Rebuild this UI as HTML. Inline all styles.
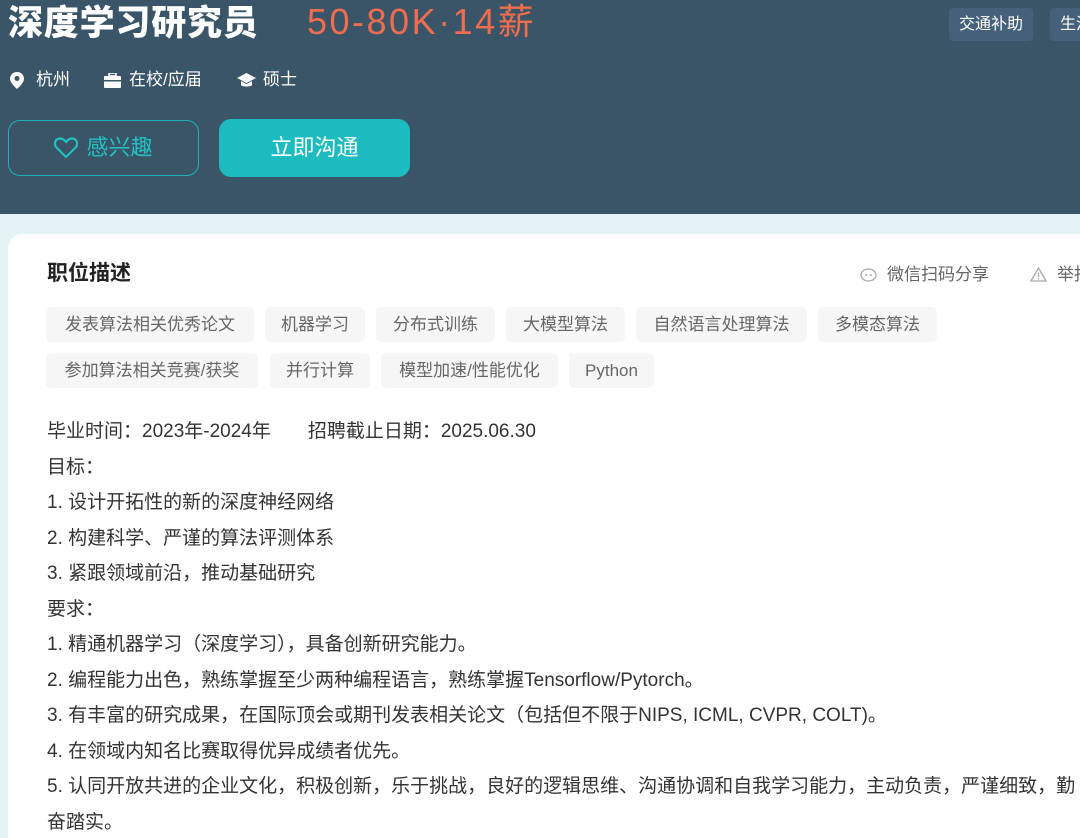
<!DOCTYPE html>
<html style="width:1080px;height:838px;overflow:hidden"><head><meta charset="utf-8"><style>
*{margin:0;padding:0;box-sizing:border-box}
body{width:1080px;height:838px;overflow:hidden;background:#e3f3f6;font-family:"Liberation Sans","Noto Sans CJK SC",sans-serif;position:relative}
.hd{position:absolute;left:0;top:0;width:1080px;height:214px;background:#3a5468}
.abs{position:absolute;white-space:nowrap}
.title{left:8px;top:2px;font-size:35px;font-weight:900;color:#fff;line-height:44px;letter-spacing:0.8px}
.sal{left:307px;top:0px;font-size:36px;color:#f26d4e;line-height:44px;letter-spacing:2.5px}
.info{top:68px;font-size:17px;color:#fff;line-height:24px}
.btn1{left:8px;top:120px;width:191px;height:56px;border:1px solid #1fb3b8;border-radius:12px;color:#22c0c2;font-size:22px;line-height:54px;text-align:center}
.btn2{left:219px;top:119px;width:191px;height:58px;background:#1cbcc0;border-radius:12px;color:#fff;font-size:22px;line-height:58px;text-align:center}
.wt{top:8px;height:33px;background:#45607a;border-radius:4px;color:#fff;font-size:16px;line-height:33px;padding:0 10px}
.card{position:absolute;left:8px;top:234px;width:1100px;height:604px;background:#fff;border-radius:14px 0 0 0}
.h2{left:47px;top:260px;font-size:21px;font-weight:bold;color:#222;line-height:28px}
.sh{top:264px;font-size:17px;color:#666;line-height:22px}
.tag{height:35px;background:#f6f6f6;border-radius:5px;color:#666;font-size:17px;line-height:35px;text-align:center}
.txt{left:47px;top:414px;font-size:19px;color:#333;line-height:35.5px}
</style></head><body>
<div class="hd"></div>
<div class="abs title">深度学习研究员</div>
<div class="abs sal">50-80K·14薪</div>
<div class="abs wt" style="left:949px">交通补助</div>
<div class="abs wt" style="left:1050px">生活</div>
<svg class="abs" style="left:10px;top:72px" width="14" height="17" viewBox="0 0 14 17"><path d="M7 0C3 0 0 3 0 7c0 4 7 10 7 10s7-6 7-10C14 3 11 0 7 0z" fill="#fff"/><circle cx="7" cy="6.5" r="2.5" fill="#3a5468"/></svg>
<div class="abs info" style="left:36px">杭州</div>
<svg class="abs" style="left:104px;top:73px" width="17" height="15" viewBox="0 0 17 15"><rect x="5" y="0" width="7" height="3" fill="none" stroke="#fff" stroke-width="1.6"/><rect x="0" y="3" width="17" height="12" rx="1" fill="#fff"/><rect x="0" y="7" width="17" height="1.5" fill="#3a5468"/></svg>
<div class="abs info" style="left:129px">在校/应届</div>
<svg class="abs" style="left:237px;top:73px" width="19" height="15" viewBox="0 0 19 15"><path d="M9.5 0L19 5 9.5 10 0 5z" fill="#fff"/><path d="M4 8v4c0 2 11 2 11 0V8l-5.5 3z" fill="#fff"/></svg>
<div class="abs info" style="left:263px">硕士</div>
<div class="abs btn1"><svg style="vertical-align:-3px;margin-right:8px" width="24" height="21" viewBox="0 0 24 21"><path d="M12 20L2.5 10.5C-0.5 7.5 1 2 5.5 1.5 8.5 1.2 10.5 3 12 5 13.5 3 15.5 1.2 18.5 1.5 23 2 24.5 7.5 21.5 10.5z" fill="none" stroke="#22c0c2" stroke-width="2.2"/></svg>感兴趣</div>
<div class="abs btn2">立即沟通</div>
<div class="card"></div>
<div class="abs h2">职位描述</div>
<svg class="abs" style="left:860px;top:268px" width="17" height="15" viewBox="0 0 17 15"><ellipse cx="8.5" cy="7" rx="7.5" ry="6" fill="none" stroke="#aaa" stroke-width="1.3"/><circle cx="6" cy="7" r="1" fill="#aaa"/><circle cx="11" cy="7" r="1" fill="#aaa"/></svg>
<div class="abs sh" style="left:887px">微信扫码分享</div>
<svg class="abs" style="left:1030px;top:267px" width="17" height="15" viewBox="0 0 17 15"><path d="M8.5 1L16 14H1z" fill="none" stroke="#aaa" stroke-width="1.3"/><path d="M8.5 5.5v4.5M8.5 11v1.5" stroke="#aaa" stroke-width="1.3"/></svg>
<div class="abs sh" style="left:1057px">举报</div>
<div class="abs tag" style="left:46px;top:307px;width:208px">发表算法相关优秀论文</div>
<div class="abs tag" style="left:265px;top:307px;width:100px">机器学习</div>
<div class="abs tag" style="left:376px;top:307px;width:119px">分布式训练</div>
<div class="abs tag" style="left:506px;top:307px;width:119px">大模型算法</div>
<div class="abs tag" style="left:636px;top:307px;width:171px">自然语言处理算法</div>
<div class="abs tag" style="left:818px;top:307px;width:119px">多模态算法</div>
<div class="abs tag" style="left:46px;top:353px;width:212px">参加算法相关竞赛/获奖</div>
<div class="abs tag" style="left:270px;top:353px;width:100px">并行计算</div>
<div class="abs tag" style="left:381px;top:353px;width:177px">模型加速/性能优化</div>
<div class="abs tag" style="left:569px;top:353px;width:85px">Python</div>
<div class="abs txt">毕业时间：2023年-2024年&nbsp;&nbsp;&nbsp;&nbsp;&nbsp;&nbsp;&nbsp;招聘截止日期：2025.06.30<br>目标：<br>1. 设计开拓性的新的深度神经网络<br>2. 构建科学、严谨的算法评测体系<br>3. 紧跟领域前沿，推动基础研究<br>要求：<br>1. 精通机器学习（深度学习），具备创新研究能力。<br>2. 编程能力出色，熟练掌握至少两种编程语言，熟练掌握Tensorflow/Pytorch。<br>3. 有丰富的研究成果，在国际顶会或期刊发表相关论文（包括但不限于NIPS, ICML, CVPR, COLT)。<br>4. 在领域内知名比赛取得优异成绩者优先。<br>5. 认同开放共进的企业文化，积极创新，乐于挑战，良好的逻辑思维、沟通协调和自我学习能力，主动负责，严谨细致，勤<br>奋踏实。</div>
</body></html>
